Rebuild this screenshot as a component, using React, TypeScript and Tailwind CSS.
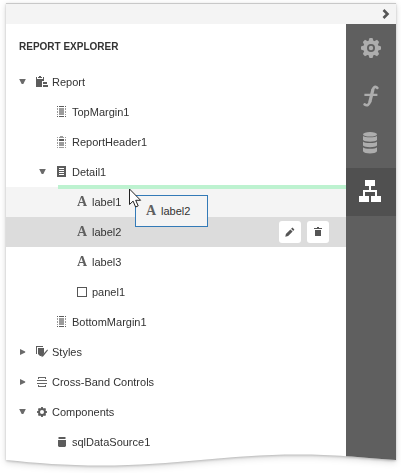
import type { ReactNode } from 'react';

type IconName = 'report' | 'margin' | 'header' | 'detail' | 'label' | 'panel' | 'styles' | 'cross' | 'gear' | 'data';

function Gear({ size, hub, hole }: { size: number; hub: boolean; hole: string }) {
  return (
    <svg width={size} height={size} viewBox="0 0 20 20" fill="currentColor">
      {[0, 45, 90, 135].map((angle) => (
        <path key={angle} d="M8.5 0h3l1.2 3.4v13.2L11.5 20h-3l-1.2-3.4V3.4z" transform={`rotate(${angle} 10 10)`} />
      ))}
      <circle cx="10" cy="10" r="7.6" />
      <circle cx="10" cy="10" r="4" className={hole} />
      {hub && <circle cx="10" cy="10" r="2.2" />}
    </svg>
  );
}

const icons: Record<IconName, ReactNode> = {
  report: (
    <svg width="12" height="12" viewBox="0 0 12 12" fill="#5c5c5c" shapeRendering="crispEdges">
      <path d="M0 1h1v2h6V1h1v4H6v6H0zM2 1h1V0h2v1h1v1H2zM7 6h4v2H7zM7 9h5v2H7z" />
    </svg>
  ),
  margin: (
    <svg width="10" height="12" viewBox="0 0 10 12" shapeRendering="crispEdges">
      <path fill="#5c5c5c" d="M0 0h1v1H0zM2 0h5v1H2zM8 0h1v1H8zM0 10h1v1H0zM2 10h5v1H2zM8 10h1v1H8z" />
      <path fill="#9b9b9b" d="M2 2h5v7H2zM0 2h1v2H0zM0 5h1v2H0zM0 8h1v1H0zM8 2h1v2H8zM8 5h1v2H8zM8 8h1v1H8z" />
    </svg>
  ),
  header: (
    <svg width="10" height="12" viewBox="0 0 10 12" shapeRendering="crispEdges">
      <path fill="#9b9b9b" d="M0 1h1v1H0zM3 0h3v1H3zM2 1h5v1H2zM8 1h1v1H8zM2 6h5v4H2zM0 3h1v2H0zM0 6h1v2H0zM0 9h1v1H0zM8 3h1v2H8zM8 6h1v2H8zM8 9h1v1H8zM0 11h1v1H0zM2 11h5v1H2zM8 11h1v1H8z" />
      <path fill="#5c5c5c" d="M2 3h5v2H2z" />
    </svg>
  ),
  detail: (
    <svg width="10" height="12" viewBox="0 0 10 12" shapeRendering="crispEdges">
      <path fill="#5c5c5c" d="M0 0h9v11H0z" />
      <path fill="#fff" d="M2 2h5v1H2zM2 4h5v1H2zM2 6h5v1H2zM2 8h5v1H2z" />
    </svg>
  ),
  label: <span className="block w-[10px] font-['Liberation_Serif'] text-[14px] font-bold leading-[14px] text-[#606060]">A</span>,
  panel: <span className="block h-[10px] w-[10px] border border-[#555]" />,
  styles: (
    <svg width="12" height="12" viewBox="0 0 12 12" fill="#5c5c5c">
      <path d="M0 0h7v1H1v7H0zM2 2h6v5L5.5 10H4L2 8zM11.3 3.6l.7.6-4.7 6-2 1 .8-1.9z" />
    </svg>
  ),
  cross: (
    <svg width="10" height="10" viewBox="0 0 10 10" fill="#666" shapeRendering="crispEdges">
      <path d="M1 0h8v2H8V1H2v1H1zM0 3h10v1H0zM0 6h10v1H0zM1 8h1v1h6V8h1v2H1z" />
    </svg>
  ),
  gear: (
    <span className="block text-[#5c5c5c]">
      <Gear size={10} hub={false} hole="fill-white" />
    </span>
  ),
  data: (
    <svg width="8" height="10" viewBox="0 0 8 10" fill="#5c5c5c">
      <path d="M1 0h6l1 1-1 1H1L0 1zM0 3h8v6L7 10H1L0 9z" />
    </svg>
  ),
};

interface Node {
  name: string;
  icon: IconName;
  level: 0 | 1 | 2;
  arrow?: 'open' | 'closed';
  state?: 'target' | 'selected';
}

const nodes: Node[] = [
  { name: 'Report', icon: 'report', level: 0, arrow: 'open' },
  { name: 'TopMargin1', icon: 'margin', level: 1 },
  { name: 'ReportHeader1', icon: 'header', level: 1 },
  { name: 'Detail1', icon: 'detail', level: 1, arrow: 'open' },
  { name: 'label1', icon: 'label', level: 2, state: 'target' },
  { name: 'label2', icon: 'label', level: 2, state: 'selected' },
  { name: 'label3', icon: 'label', level: 2 },
  { name: 'panel1', icon: 'panel', level: 2 },
  { name: 'BottomMargin1', icon: 'margin', level: 1 },
  { name: 'Styles', icon: 'styles', level: 0, arrow: 'closed' },
  { name: 'Cross-Band Controls', icon: 'cross', level: 0, arrow: 'closed' },
  { name: 'Components', icon: 'gear', level: 0, arrow: 'open' },
  { name: 'sqlDataSource1', icon: 'data', level: 1 },
];

const indent = { 0: 'pl-[13px]', 1: 'pl-[33px]', 2: 'pl-[53px]' };
const background = { none: '', target: 'bg-[#f4f4f4]', selected: 'bg-[#dcdcdc]' };

function Row({ name, icon, level, arrow, state }: Node) {
  return (
    <li className={`relative flex h-[30px] items-center ${indent[level]} ${background[state ?? 'none']}`}>
      <span className="flex w-[14px] shrink-0">
        {arrow && (
          <svg width="7" height="6" viewBox="0 0 7 6" fill="#6a6a6a">
            <path d={arrow === 'open' ? 'M.2 0h6.6L4.3 5H2.7z' : 'M1 0 6.2 2.4v1.2L1 6z'} />
          </svg>
        )}
      </span>
      <span className="mr-px flex w-[18px] shrink-0 justify-center">{icons[icon]}</span>
      <span>{name}</span>
      {state === 'target' && <span className="absolute -top-[2px] left-[52px] right-0 h-1 bg-[#bdf2d0]" />}
      {state === 'selected' && (
        <span className="ml-auto mr-[17px] flex gap-[6px]">
          <button className="flex h-[22px] w-[22px] items-center justify-center rounded-[3px] bg-white">
            <svg width="10" height="10" viewBox="0 0 10 10" fill="#555">
              <path d="M.3 9.7.9 6.9 5.4 2.4l2.2 2.2L3.1 9zM6.1 1.7 7.4.6l2 2-1.2 1.3z" />
            </svg>
          </button>
          <button className="flex h-[22px] w-[22px] items-center justify-center rounded-[3px] bg-white">
            <svg width="8" height="10" viewBox="0 0 8 10" fill="#555" shapeRendering="crispEdges">
              <path d="M3 0h2v1h3v1H0V1h3zM1 3h6v6H1z" />
            </svg>
          </button>
        </span>
      )}
    </li>
  );
}

function Tabs() {
  return (
    <nav className="w-[50px] shrink-0 bg-[#5f5f5f] text-[#adadad]">
      <div className="flex h-12 items-center justify-center">
        <Gear size={20} hub hole="fill-[#5f5f5f]" />
      </div>
      <div className="flex h-12 items-center justify-center">
        <svg width="16" height="22" viewBox="0 0 16 22" fill="none" stroke="currentColor" strokeLinecap="round">
          <path strokeWidth="3.2" d="M9.8 5 7 16.4" />
          <path strokeWidth="2.6" d="M14.3 2.9C12.6.8 10.4 2 9.8 5M7 16.4C6.2 19.8 4.2 21.2 1.6 19.4" />
          <path strokeWidth="2.2" strokeLinecap="butt" d="M1.4 9.9h13" />
        </svg>
      </div>
      <div className="flex h-12 items-center justify-center pb-[2px] pr-[2px]">
        <svg width="14" height="22" viewBox="0 0 14 22" fill="currentColor">
          <ellipse cx="7" cy="2.3" rx="7" ry="2.3" />
          <path d="M0 4c1.5 1.8 12.5 1.8 14 0v4c-1.5 2.2-12.5 2.2-14 0zM0 9.6c1.5 2 12.5 2 14 0v4c-1.5 2.2-12.5 2.2-14 0zM0 15.2c1.5 2 12.5 2 14 0v4c-1.5 3-12.5 3-14 0z" />
        </svg>
      </div>
      <div className="flex h-12 items-center justify-center bg-[#505050] pb-[2px] pr-[2px]">
        <svg width="22" height="22" viewBox="0 0 22 22" fill="#fff" shapeRendering="crispEdges">
          <path d="M6 0h10v6h-4v4h6v6h4v6H12v-6h4v-4H6v4h4v6H0v-6h4v-6h6V6H6z" />
        </svg>
      </div>
    </nav>
  );
}

export default function App() {
  return (
    <div className="relative h-[473px] w-[401px] overflow-hidden bg-white pl-[6px] pt-[3px] font-['Liberation_Sans',Arial,sans-serif] text-[11px] leading-4 text-[#333]">
      <div className="w-[390px] [filter:drop-shadow(0_1px_1px_rgba(0,0,0,0.2))_drop-shadow(0_2px_3px_rgba(0,0,0,0.15))]">
        <div className="flex h-[464px] flex-col bg-white [clip-path:path('M0_0H390V457C350_454_330_451.5_292_451.5C220_451.5_170_462.5_95_462.5C60_462.5_30_460_0_457Z')]">
          <header className="flex h-[21px] shrink-0 items-center justify-end border-t border-[#c8c8c8] bg-[#f4f4f4] pr-[6px]">
            <svg width="8" height="10" viewBox="0 0 8 10" fill="none" stroke="#555" strokeWidth="2.6">
              <path d="M1.5 1 5.5 5l-4 4" />
            </svg>
          </header>
          <div className="flex flex-1">
            <main className="flex-1">
              <h1 className="h-[43px] pl-[13px] pt-[15px] text-[10px] font-bold leading-4">REPORT EXPLORER</h1>
              <ul>
                {nodes.map((node) => (
                  <Row key={node.name} {...node} />
                ))}
              </ul>
            </main>
            <Tabs />
          </div>
        </div>
      </div>

      {/* Node being dragged, and the pointer */}
      <div className="absolute left-[135px] top-[195px] flex h-8 w-[73px] items-center border border-[#337ab7] bg-[#f4f4f4] pl-[10px]">
        {icons.label}
        <span className="pl-[5px]">label2</span>
      </div>
      <svg className="absolute left-[129px] top-[188px]" width="13" height="21" viewBox="0 0 13 21" fill="#fff" stroke="#222" strokeWidth="1">
        <path d="M.5 1v15.5l3.6-3.4 2.5 5.9 2.6-1.1-2.5-5.6h4.9z" />
      </svg>
    </div>
  );
}
